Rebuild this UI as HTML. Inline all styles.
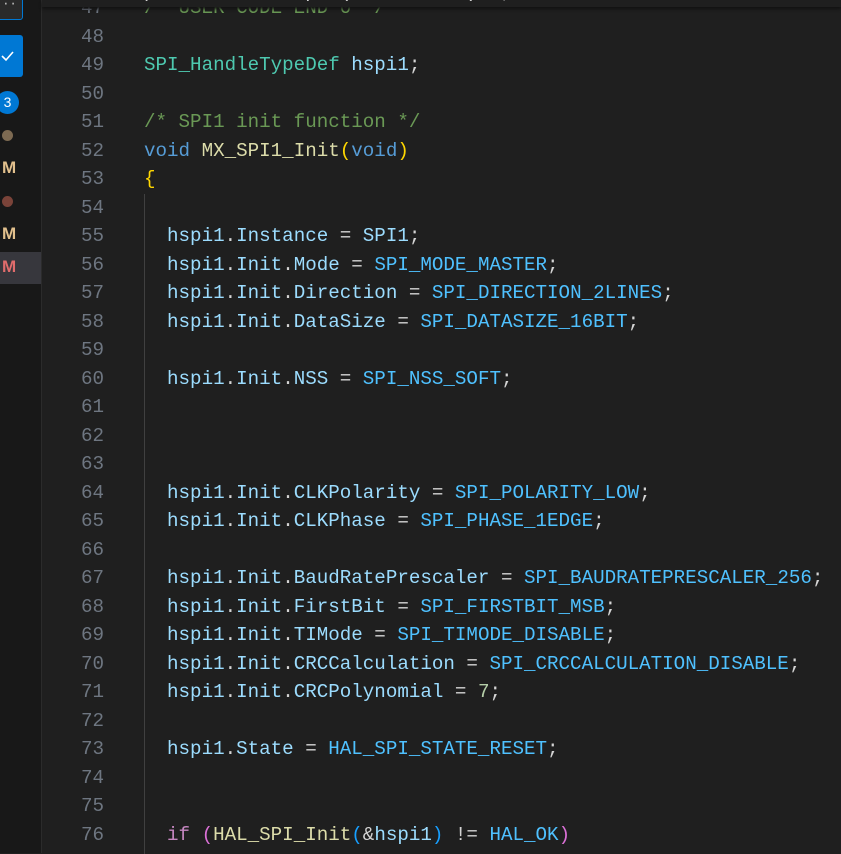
<!DOCTYPE html>
<html><head><meta charset="utf-8"><style>
html,body{margin:0;padding:0;}
body{width:841px;height:853px;background:#1f1f1f;position:relative;overflow:hidden;font-family:"Liberation Mono",monospace;}
#side{position:absolute;left:0;top:0;width:41px;height:853px;background:#181818;border-right:1px solid #2b2b2b;}
#code{position:absolute;left:0;top:1px;width:841px;height:853px;}
.ln{position:absolute;left:41px;width:63px;text-align:right;color:#6e7681;font-size:19.2px;height:28.5px;line-height:28.5px;}
.cd{position:absolute;left:144px;white-space:pre;font-size:19.2px;height:28.5px;line-height:28.5px;color:#d4d4d4;}
.t{color:#4ec9b0}.v{color:#9cdcfe}.c{color:#6a9955}.k{color:#569cd6}.f{color:#dcdcaa}.y{color:#ffd700}.m{color:#4fc1ff}.n{color:#b5cea8}.p{color:#c586c0}.pk{color:#da70d6}.b{color:#179fff}
</style></head><body>
<div id="side">
<div style="position:absolute;left:-4px;top:-4px;width:25px;height:22px;border:1px solid #0078d4;border-radius:3px;background:#2a2a2a;color:#ccc;font-size:12px;line-height:14px;text-align:center;">··</div>
<div style="position:absolute;left:-4px;top:35px;width:27px;height:42px;background:#0078d4;border-radius:3px;"><svg width="27" height="42"><path d="M6 21 L10 25 L17 17" stroke="#fff" stroke-width="1.6" fill="none"/></svg></div>
<div style="position:absolute;left:-4px;top:91px;width:23px;height:23px;border-radius:50%;background:#0078d4;color:#fff;font-family:'Liberation Sans',sans-serif;font-size:14px;line-height:23px;text-align:center;">3</div>
<div style="position:absolute;left:2px;top:130px;width:11px;height:11px;border-radius:50%;background:#7d6a52;"></div>
<div style="position:absolute;left:2px;top:196px;width:11px;height:11px;border-radius:50%;background:#7a4339;"></div>
<div style="position:absolute;left:0;top:252px;width:41px;height:32px;background:#37373d;"></div>
<div style="position:absolute;left:2px;top:158px;color:#e2c08d;font-family:'Liberation Sans',sans-serif;font-size:17px;font-weight:bold;">M</div>
<div style="position:absolute;left:2px;top:224px;color:#e2c08d;font-family:'Liberation Sans',sans-serif;font-size:17px;font-weight:bold;">M</div>
<div style="position:absolute;left:2px;top:257px;color:#e06c6c;font-family:'Liberation Sans',sans-serif;font-size:17px;font-weight:bold;">M</div>
</div>
<div style="position:absolute;left:144px;top:194px;width:1px;height:660px;background:#404040;"></div>
<div id="code">
<div class="ln" style="top:-7px">47</div><div class="cd c" style="top:-7px">/* USER CODE END 0 */</div>
<div class="ln" style="top:22px">48</div>
<div class="ln" style="top:50px">49</div><div class="cd" style="top:50px"><span class="t">SPI_HandleTypeDef</span> <span class="v">hspi1</span>;</div>
<div class="ln" style="top:79px">50</div>
<div class="ln" style="top:107px">51</div><div class="cd c" style="top:107px">/* SPI1 init function */</div>
<div class="ln" style="top:136px">52</div><div class="cd" style="top:136px"><span class="k">void</span> <span class="f">MX_SPI1_Init</span><span class="y">(</span><span class="k">void</span><span class="y">)</span></div>
<div class="ln" style="top:164px">53</div><div class="cd y" style="top:164px">{</div>
<div class="ln" style="top:193px">54</div>
<div class="ln" style="top:221px">55</div><div class="cd" style="top:221px">  <span class="v">hspi1</span>.<span class="v">Instance</span> = <span class="v">SPI1</span>;</div>
<div class="ln" style="top:250px">56</div><div class="cd" style="top:250px">  <span class="v">hspi1</span>.<span class="v">Init</span>.<span class="v">Mode</span> = <span class="m">SPI_MODE_MASTER</span>;</div>
<div class="ln" style="top:278px">57</div><div class="cd" style="top:278px">  <span class="v">hspi1</span>.<span class="v">Init</span>.<span class="v">Direction</span> = <span class="m">SPI_DIRECTION_2LINES</span>;</div>
<div class="ln" style="top:307px">58</div><div class="cd" style="top:307px">  <span class="v">hspi1</span>.<span class="v">Init</span>.<span class="v">DataSize</span> = <span class="m">SPI_DATASIZE_16BIT</span>;</div>
<div class="ln" style="top:335px">59</div>
<div class="ln" style="top:364px">60</div><div class="cd" style="top:364px">  <span class="v">hspi1</span>.<span class="v">Init</span>.<span class="v">NSS</span> = <span class="m">SPI_NSS_SOFT</span>;</div>
<div class="ln" style="top:392px">61</div>
<div class="ln" style="top:421px">62</div>
<div class="ln" style="top:449px">63</div>
<div class="ln" style="top:478px">64</div><div class="cd" style="top:478px">  <span class="v">hspi1</span>.<span class="v">Init</span>.<span class="v">CLKPolarity</span> = <span class="m">SPI_POLARITY_LOW</span>;</div>
<div class="ln" style="top:506px">65</div><div class="cd" style="top:506px">  <span class="v">hspi1</span>.<span class="v">Init</span>.<span class="v">CLKPhase</span> = <span class="m">SPI_PHASE_1EDGE</span>;</div>
<div class="ln" style="top:535px">66</div>
<div class="ln" style="top:563px">67</div><div class="cd" style="top:563px">  <span class="v">hspi1</span>.<span class="v">Init</span>.<span class="v">BaudRatePrescaler</span> = <span class="m">SPI_BAUDRATEPRESCALER_256</span>;</div>
<div class="ln" style="top:592px">68</div><div class="cd" style="top:592px">  <span class="v">hspi1</span>.<span class="v">Init</span>.<span class="v">FirstBit</span> = <span class="m">SPI_FIRSTBIT_MSB</span>;</div>
<div class="ln" style="top:620px">69</div><div class="cd" style="top:620px">  <span class="v">hspi1</span>.<span class="v">Init</span>.<span class="v">TIMode</span> = <span class="m">SPI_TIMODE_DISABLE</span>;</div>
<div class="ln" style="top:649px">70</div><div class="cd" style="top:649px">  <span class="v">hspi1</span>.<span class="v">Init</span>.<span class="v">CRCCalculation</span> = <span class="m">SPI_CRCCALCULATION_DISABLE</span>;</div>
<div class="ln" style="top:677px">71</div><div class="cd" style="top:677px">  <span class="v">hspi1</span>.<span class="v">Init</span>.<span class="v">CRCPolynomial</span> = <span class="n">7</span>;</div>
<div class="ln" style="top:706px">72</div>
<div class="ln" style="top:734px">73</div><div class="cd" style="top:734px">  <span class="v">hspi1</span>.<span class="v">State</span> = <span class="m">HAL_SPI_STATE_RESET</span>;</div>
<div class="ln" style="top:763px">74</div>
<div class="ln" style="top:791px">75</div>
<div class="ln" style="top:820px">76</div><div class="cd" style="top:820px">  <span class="p">if</span> <span class="pk">(</span><span class="f">HAL_SPI_Init</span><span class="b">(</span>&amp;<span class="v">hspi1</span><span class="b">)</span> != <span class="m">HAL_OK</span><span class="pk">)</span></div>
</div>
<div style="position:absolute;left:42px;top:0;width:799px;height:7px;background:#1f1f1f;overflow:hidden;box-shadow:0 2px 3px #111;">
<div class="cd" style="left:102px;top:-22px;color:#d4d4d4;">p  _  _ _  _  p  ( _  _     )  ,</div></div>
</body></html>
